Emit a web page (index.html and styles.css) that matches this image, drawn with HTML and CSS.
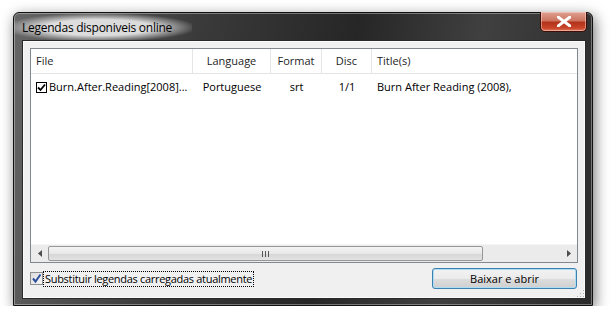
FILE: index.html
```html
<!DOCTYPE html>
<html lang="pt">
  <head>
    <meta charset="UTF-8" />
    <title>Legendas disponiveis online</title>
    <link rel="stylesheet" href="styles.css">
  </head>
  <body>
    <div class="window">
      <div class="titlebar">
        <span class="title">Legendas disponiveis online</span>
        <button class="close-btn">
          <svg width="14" height="11" viewBox="0 0 14 11">
            <path d="M1 1 L13 10 M13 1 L1 10" stroke="#fff" stroke-width="3" stroke-linecap="square" fill="none" />
          </svg>
        </button>
      </div>
      <div class="client">
        <div class="list">
          <div class="list-header">
            <div class="col col-file">File</div>
            <div class="col col-lang center">Language</div>
            <div class="col col-format center">Format</div>
            <div class="col col-disc center">Disc</div>
            <div class="col col-title">Title(s)</div>
          </div>
          <div class="list-row">
            <div class="cell col-file">
              <span class="row-check">
                <svg width="9" height="9" viewBox="0 0 9 9">
                  <path d="M1 4.5 L3.5 7 L8 1.5" stroke="#000" stroke-width="1.8" fill="none" />
                </svg>
              </span>
              Burn.After.Reading[2008]...
            </div>
            <div class="cell col-lang center">Portuguese</div>
            <div class="cell col-format center">srt</div>
            <div class="cell col-disc center">1/1</div>
            <div class="cell col-title">Burn After Reading (2008),</div>
          </div>
          <div class="list-body"></div>
          <div class="hscroll">
            <div class="arrow">
              <svg width="4" height="7" viewBox="0 0 4 7"><path d="M4 0 L0 3.5 L4 7 Z" fill="#4d4d4d" /></svg>
            </div>
            <div class="track">
              <div class="thumb">
                <span class="grip"></span>
              </div>
            </div>
            <div class="arrow">
              <svg width="4" height="7" viewBox="0 0 4 7"><path d="M0 0 L4 3.5 L0 7 Z" fill="#4d4d4d" /></svg>
            </div>
          </div>
        </div>
        <div class="footer">
          <label class="option">
            <span class="checkbox">
              <svg width="11" height="11" viewBox="0 0 11 11">
                <path d="M2 5.5 L4.5 8.5 L9.5 1.5" stroke="#2c4f9e" stroke-width="2" fill="none" />
              </svg>
            </span>
            <span class="option-text">Substituir legendas carregadas atualmente</span>
          </label>
          <button class="btn">Baixar e abrir</button>
        </div>
        <div class="grip-corner"></div>
      </div>
    </div>
  </body>
</html>
```

FILE: styles.css
```css
body {
  margin: 0;
  background: #fff;
  font-family: "Open Sans", "Noto Sans", sans-serif;
  font-size: 11px;
  color: #000;
}

.window {
  margin: 12px 0 0 13px;
  width: 580px;
  height: 294px;
  box-sizing: border-box;
  padding: 0 6px 6px 8px;
  display: flex;
  flex-direction: column;
  border: 1px solid #111;
  border-radius: 6px 6px 0 0;
  background: linear-gradient(100deg, #666 0%, #3a3a3a 30%, #262626 55%, #404040 75%, #2a2a2a 100%);
  box-shadow: 2px 4px 14px rgba(0, 0, 0, 0.55), inset 0 0 0 1px rgba(255, 255, 255, 0.35);
}

.titlebar {
  height: 27px;
  display: flex;
  align-items: flex-start;
  justify-content: space-between;
}

/* glass glow behind the caption */
.title {
  margin: 0 0 0 -8px;
  padding: 6px 20px 6px 8px;
  font-size: 12px;
  color: #000;
  letter-spacing: -0.25px;
  background: radial-gradient(ellipse 55% 50% at 48% 50%, rgba(255, 255, 255, 0.8) 55%, rgba(255, 255, 255, 0) 100%);
}

.close-btn {
  width: 47px;
  height: 20px;
  margin: -1px -1px 0 0;
  border: 1px solid #3b0f08;
  border-top: none;
  border-radius: 0 0 5px 5px;
  background: linear-gradient(#e0a192 0%, #cd7561 45%, #b3321a 55%, #c9462a 85%, #e07a5f 100%);
  box-shadow: inset 0 0 0 1px rgba(255, 220, 210, 0.5);
  display: flex;
  align-items: center;
  justify-content: center;
  padding: 0;
}

.client {
  flex: 1;
  position: relative;
  background: #f0f0f0;
  border: 1px solid #2a2a2a;
  box-shadow: inset 0 0 0 1px #fafafa;
  padding: 7px 7px 0 7px;
  display: flex;
  flex-direction: column;
}

.list {
  height: 213px;
  background: #fff;
  border: 1px solid #828790;
  display: flex;
  flex-direction: column;
}

.list-header {
  display: flex;
  height: 24px;
  border-bottom: 1px solid #e5e5e5;
  background: #fff;
}

.col {
  line-height: 24px;
  padding: 0 5px;
  border-right: 1px solid #e5e5e5;
  box-sizing: border-box;
  color: #1e1e1e;
}

.center {
  text-align: center;
}

.col-file {
  width: 162px;
}

.col-lang {
  width: 78px;
}

.col-format {
  width: 51px;
}

.col-disc {
  width: 50px;
}

.col-title {
  flex: 1;
  border-right: none;
}

.list-row {
  display: flex;
  height: 24px;
  margin-top: 1px;
}

.cell {
  line-height: 24px;
  padding: 0 5px;
  box-sizing: border-box;
  white-space: nowrap;
}

.cell.col-file {
  display: flex;
  align-items: center;
  gap: 2px;
}

.row-check {
  width: 11px;
  height: 11px;
  border: 1px solid #000;
  box-sizing: border-box;
  display: flex;
  align-items: center;
  justify-content: center;
  background: #fff;
}

.list-body {
  flex: 1;
}

.hscroll {
  height: 17px;
  display: flex;
  background: #ebebeb;
  border-top: 1px solid #f5f5f5;
}

.arrow {
  width: 17px;
  display: flex;
  align-items: center;
  justify-content: center;
}

.track {
  flex: 1;
  padding: 1px 0;
  display: flex;
}

.thumb {
  width: 435px;
  border: 1px solid #979797;
  border-radius: 2px;
  background: linear-gradient(#f3f3f3 0%, #e8e8e8 50%, #d5d5d5 51%, #e3e3e3 100%);
  display: flex;
  align-items: center;
  justify-content: center;
  box-sizing: border-box;
}

.grip {
  width: 7px;
  height: 6px;
  background: repeating-linear-gradient(90deg, #555 0, #555 1px, transparent 1px, transparent 3px);
}

.footer {
  flex: 1;
  display: flex;
  align-items: center;
  justify-content: space-between;
  padding-bottom: 4px;
}

.option {
  display: flex;
  align-items: center;
  gap: 1px;
}

.checkbox {
  width: 13px;
  height: 13px;
  box-sizing: border-box;
  border: 1px solid #8e8f8f;
  background: linear-gradient(135deg, #dcdcdc, #f6f6f6);
  display: flex;
  align-items: center;
  justify-content: center;
}

.option-text {
  outline: 1px dotted #000;
  padding: 0 1px;
  line-height: 14px;
  font-size: 11px;
  letter-spacing: -0.3px;
}

.btn {
  width: 145px;
  height: 21px;
  margin-right: 1px;
  font-family: "Open Sans", "Noto Sans", sans-serif;
  font-size: 11px;
  color: #000;
  border: 1px solid #3c7fb1;
  border-radius: 3px;
  background: linear-gradient(#f2f2f2 0%, #ebebeb 50%, #dddddd 51%, #cfcfcf 100%);
  box-shadow: inset 0 0 0 1px #aedcf3;
  padding: 0;
}

.grip-corner {
  position: absolute;
  right: 1px;
  bottom: 1px;
  width: 8px;
  height: 8px;
  background: radial-gradient(circle, #b0b0b0 0.8px, transparent 1px) 0 0 / 3px 3px;
  clip-path: polygon(100% 0, 100% 100%, 0 100%);
}
```
